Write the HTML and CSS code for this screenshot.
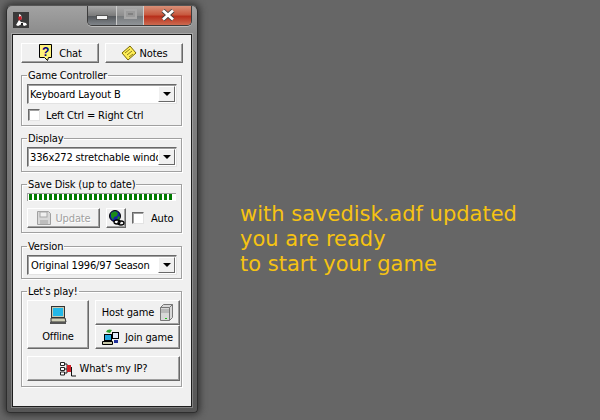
FILE: index.html
```html
<!DOCTYPE html>
<html lang="en">

<head>
  <meta charset="UTF-8">
  <title>Game launcher</title>
  <link rel="stylesheet" href="styles.css">
</head>

<body>
  <div class="window">
    <div class="titlebar">
      <svg class="app-icon" width="16" height="16" viewBox="0 0 16 16">
        <rect width="16" height="16" fill="#3a3a3a"/>
        <path d="M6 2l2 1 1 4-3 1z" fill="#e8e8e8"/>
        <path d="M5 5l3-1 1 3-3 2z" fill="#c8202a"/>
        <path d="M3 13l3-5 2 2 5 1 1 2-3 1-2-2-4 2z" fill="#fff"/>
        <rect x="8" y="11" width="2" height="2" fill="#222"/>
      </svg>
      <div class="caption-btns">
        <div class="cap cap-min"><span class="min-glyph"></span></div>
        <div class="cap cap-max"><span class="max-glyph"></span></div>
        <div class="cap cap-close">
          <svg width="16" height="12" viewBox="0 0 16 12">
            <path d="M3 1.500l10 9M13 1.500l-10 9" stroke="#444" stroke-width="4.400" fill="none"/>
            <path d="M3 1.500l10 9M13 1.500l-10 9" stroke="#fff" stroke-width="2.800" fill="none"/>
          </svg>
        </div>
      </div>
    </div>

    <div class="client">
      <div class="top-row">
        <button class="btn top-btn">
          <svg width="15" height="18" viewBox="0 0 15 18">
            <path d="M1.500.5h12v13h-3l-1 3-3-3h-5z" fill="#fff27a" stroke="#000"/>
            <text x="7.500" y="11.500" font-size="12" font-weight="bold" text-anchor="middle" fill="#000080" font-family="Liberation Sans">?</text>
          </svg>
          Chat
        </button>
        <button class="btn top-btn notes-btn">
          <svg width="16" height="16" viewBox="0 0 16 16">
            <path d="M1 8l8-7 6 7-8 7z" fill="#ffee55" stroke="#776600"/>
            <path d="M4 8l5-4M6 10l5-4M8 12l4-3" stroke="#8a7a20" fill="none"/>
          </svg>
          Notes
        </button>
      </div>

      <fieldset class="group">
        <legend>Game Controller</legend>
        <div class="combo"><span class="combo-text">Keyboard Layout B</span><span class="arrow"></span></div>
        <label class="check-row"><span class="check"></span>Left Ctrl = Right Ctrl</label>
      </fieldset>

      <fieldset class="group display-group">
        <legend>Display</legend>
        <div class="combo"><span class="combo-text">336x272 stretchable window</span><span class="arrow"></span></div>
      </fieldset>

      <fieldset class="group save-group">
        <legend>Save Disk (up to date)</legend>
        <div class="progress" id="progress"></div>
        <div class="save-row">
          <button class="btn update-btn">
            <svg width="14" height="14" viewBox="0 0 14 14">
              <path d="M.5.500h11l2 2v11H.500z" fill="#d8d8d8" stroke="#a0a0a0"/>
              <rect x="3" y="1" width="7" height="5" fill="#f0f0f0" stroke="#a8a8a8"/>
              <rect x="3" y="9" width="8" height="4" fill="#bdbdbd"/>
            </svg>
            Update
          </button>
          <button class="btn globe-btn">
            <svg width="17" height="17" viewBox="0 0 17 17">
              <circle cx="7" cy="6" r="5.500" fill="#1220a8" stroke="#000"/>
              <path d="M3 3l4-2 3 2-1 3-3 1-1 3-2-3zM10 6l2 1-1 3-2 0z" fill="#1a8a1a"/>
              <ellipse cx="9" cy="12" rx="3" ry="2" fill="#fff" stroke="#000" stroke-width="1.300"/>
              <ellipse cx="13" cy="13" rx="3" ry="2" fill="none" stroke="#000" stroke-width="1.300"/>
            </svg>
          </button>
          <label class="auto"><span class="check"></span>Auto</label>
        </div>
      </fieldset>

      <fieldset class="group">
        <legend>Version</legend>
        <div class="combo"><span class="combo-text version-text">Original 1996/97 Season</span><span class="arrow"></span></div>
      </fieldset>

      <fieldset class="group play-group">
        <legend>Let's play!</legend>
        <div class="play-grid">
          <button class="btn offline-btn">
            <svg width="17" height="19" viewBox="0 0 17 19">
              <rect x="1.500" y=".5" width="13" height="11" fill="#c8c8b0" stroke="#333"/>
              <rect x="3" y="2" width="10" height="8" fill="#22b8e8"/>
              <path d="M1 12h14l1 4H1z" fill="#d0d0b8" stroke="#333"/>
              <rect x="0" y="16" width="16" height="2" fill="#555"/>
            </svg>
            Offline
          </button>
          <button class="btn host-btn">
            Host game
            <svg width="13" height="17" viewBox="0 0 13 17">
              <path d="M.5 3.500l3-3h9v13l-3 3H.500z" fill="#d8d8d8" stroke="#777"/>
              <path d="M.5 3.500h9v13M9.500 3.500l3-3" stroke="#777" fill="none"/>
              <path d="M1 6h8M1 8h8" stroke="#999"/>
              <rect x="5" y="14" width="2" height="1" fill="#20c020"/>
            </svg>
          </button>
          <button class="btn join-btn">
            <svg width="17" height="17" viewBox="0 0 17 17">
              <path d="M4 3c1-3 4-3 6-2l-2 3z" fill="#30a030"/>
              <rect x="2.500" y="5.500" width="7" height="6" fill="#22a8e0" stroke="#000"/>
              <rect x="10.500" y="3.500" width="6" height="6" fill="#dfe8f8" stroke="#000"/>
              <path d="M.5 12.500h10v3H.500z" fill="#c8c8a8" stroke="#000"/>
              <path d="M12 11h4v3h-4z" fill="#20309a"/>
            </svg>
            Join game
          </button>
          <button class="btn ip-btn">
            <svg width="16" height="16" viewBox="0 0 16 16">
              <path d="M.5 1.500h4v3h-4zM.5 6.500h4v3h-4zM.5 11h4v3h-4z" fill="#fff" stroke="#222"/>
              <path d="M4 3h3M4 8h3M4 12h3M7 3v9" stroke="#222" fill="none"/>
              <rect x="7" y="4" width="4" height="7" fill="#d02028"/>
              <path d="M11.500 6v9H16" stroke="#111" fill="none"/>
            </svg>
            What's my IP?
          </button>
        </div>
      </fieldset>
    </div>
  </div>

  <p class="message">with savedisk.adf updated<br>you are ready<br>to start your game</p>

  <script>
    // the little green blocks of the save disk bar
    const progress = document.getElementById("progress");
    for (let i = 0; i < 29; i++) {
      progress.appendChild(document.createElement("i"));
    }
  </script>
</body>

</html>
```

FILE: styles.css
```css
* {
  box-sizing: border-box;
}

html,
body {
  margin: 0;
  height: 420px;
  overflow: hidden;
}

body {
  display: flex;
  align-items: flex-start;
  background-color: #666;
  font-family: "DejaVu Sans Condensed", "DejaVu Sans", sans-serif;
  font-size: 11px;
  letter-spacing: -0.15px;
  color: #000;
}

.window {
  width: 192px;
  height: 408px;
  margin: 5px 0 0 6px;
  flex-shrink: 0;
  display: flex;
  flex-direction: column;
  padding: 0 5px 5px 5px;
  background: linear-gradient(to bottom, #a2a2a2, #8a8a8a 30px, #747474 200px, #565656);
  border: 1px solid #2e2e2e;
  border-top-color: #555;
  border-radius: 6px 6px 4px 4px;
  box-shadow: 0 0 7px 2px #333;
}

.titlebar {
  height: 28px;
  flex-shrink: 0;
  display: flex;
  justify-content: space-between;
  align-items: flex-start;
}

.app-icon {
  margin: 6px 0 0 1px;
}

.caption-btns {
  display: flex;
  height: 20px;
  border: 1px solid #3c3c3c;
  border-top: none;
  border-radius: 0 0 5px 5px;
  overflow: hidden;
  box-shadow: 0 1px 0 #bbb;
}

.cap {
  display: flex;
  align-items: center;
  justify-content: center;
}

.cap-min {
  width: 29px;
  background: linear-gradient(to bottom, #a8a8a8, #7c7c7c 50%, #55585c 55%, #80858a);
  border-right: 1px solid #ccc;
}

.min-glyph {
  width: 12px;
  height: 5px;
  margin-top: 4px;
  background-color: #f4f4f4;
  border: 1px solid #555;
}

.cap-max {
  width: 27px;
  background: linear-gradient(to bottom, #aaa, #8e8e8e 50%, #777a7c 55%, #909498);
  border-right: 1px solid #ccc;
}

.max-glyph {
  width: 13px;
  height: 10px;
  margin-top: -3px;
  border: 2px solid #a8a8a8;
  background-color: #808080;
  box-shadow: inset 0 0 0 2px #9a9a9a;
}

.cap-close {
  width: 47px;
  background: linear-gradient(to bottom, #d89078, #c85a40 45%, #b8301c 55%, #cc6a50);
}

.cap-close svg {
  margin-top: -1px;
}

.client {
  flex: 1;
  padding: 8px 8px 0 8px;
  background-color: #f0f0f0;
  border: 1px solid #1e1e1e;
  box-shadow: 0 0 0 1px rgba(255, 255, 255, 0.25);
}

.btn {
  display: flex;
  align-items: center;
  justify-content: center;
  padding: 0;
  font-family: inherit;
  font-size: 11px;
  letter-spacing: inherit;
  color: #000;
  background-color: #f0f0f0;
  border: 1px solid;
  border-color: #fff #696969 #696969 #fff;
  box-shadow: inset -1px -1px 0 #a0a0a0;
}

.top-row {
  display: flex;
  gap: 6px;
  margin-bottom: 7px;
}

.top-btn {
  width: 78px;
  height: 20px;
  gap: 6px;
}

.notes-btn {
  gap: 3px;
}

.group {
  margin: 0 0 7px;
  min-width: 0;
  width: 161px;
  padding: 3px 4px 3px 5px;
  border: 1px solid #a0a0a0;
  box-shadow: 1px 1px 0 #fff, inset 1px 1px 0 #fff;
}

.group legend {
  padding: 0 1px;
  line-height: 11px;
  height: 11px;
}

.display-group {
  padding-bottom: 4px;
}

.save-group {
  margin-bottom: 8px;
}

.combo {
  display: flex;
  align-items: center;
  height: 20px;
  background-color: #fff;
  border: 1px solid;
  border-color: #696969 #e3e3e3 #e3e3e3 #696969;
  box-shadow: inset 1px 1px 0 #a0a0a0;
  padding-left: 2px;
  overflow: hidden;
}

.combo-text {
  flex: 1;
  min-width: 0;
  white-space: nowrap;
  overflow: hidden;
}

.version-text {
  padding-left: 1px;
}

.arrow {
  flex-shrink: 0;
  position: relative;
  width: 17px;
  height: 16px;
  margin-right: 1px;
  background-color: #f0f0f0;
  border: 1px solid;
  border-color: #fff #696969 #696969 #fff;
}

.arrow::after {
  content: "";
  position: absolute;
  left: 4px;
  top: 5px;
  border-style: solid;
  border-width: 4px 4px 0;
  border-color: #000 transparent transparent;
}

.check-row {
  display: flex;
  align-items: center;
  gap: 6px;
  height: 14px;
  margin: 4px 0 0 1px;
}

.check {
  flex-shrink: 0;
  width: 12px;
  height: 12px;
  background-color: #fff;
  border: 1px solid;
  border-color: #696969 #e3e3e3 #e3e3e3 #696969;
  box-shadow: inset 1px 1px 0 #a0a0a0;
}

.progress {
  display: flex;
  gap: 2px;
  height: 8px;
  width: 149px;
  padding: 1px 2px;
  background-color: #fff;
  box-shadow: inset 1px 1px 0 #a0a0a0;
}

.progress i {
  width: 3px;
  background-color: #007a00;
}

.save-row {
  display: flex;
  align-items: center;
  height: 20px;
  margin: 7px 0 1px;
}

.update-btn {
  width: 73px;
  height: 20px;
  gap: 5px;
  color: #a0a0a0;
  text-shadow: 1px 1px 0 #fff;
}

.globe-btn {
  width: 20px;
  height: 20px;
  margin-left: 6px;
}

.auto {
  display: flex;
  align-items: center;
  gap: 7px;
  margin-left: 6px;
}

.play-grid {
  display: grid;
  grid-template-columns: 62px 85px;
  grid-template-rows: 25px 24px 32px;
  column-gap: 6px;
  padding-bottom: 2px;
}

.play-group {
  padding-right: 0;
  margin-bottom: 0;
}

.offline-btn {
  grid-row: 1 / span 2;
  flex-direction: column;
  gap: 5px;
}

.host-btn,
.join-btn {
  gap: 6px;
}

.ip-btn {
  grid-column: 1 / span 2;
  margin-top: 7px;
  gap: 4px;
}

.message {
  margin: 202px 0 0 42px;
  font-family: "DejaVu Sans", sans-serif;
  font-size: 21px;
  letter-spacing: 0;
  line-height: 25px;
  color: #f6c312;
  white-space: nowrap;
}
```
